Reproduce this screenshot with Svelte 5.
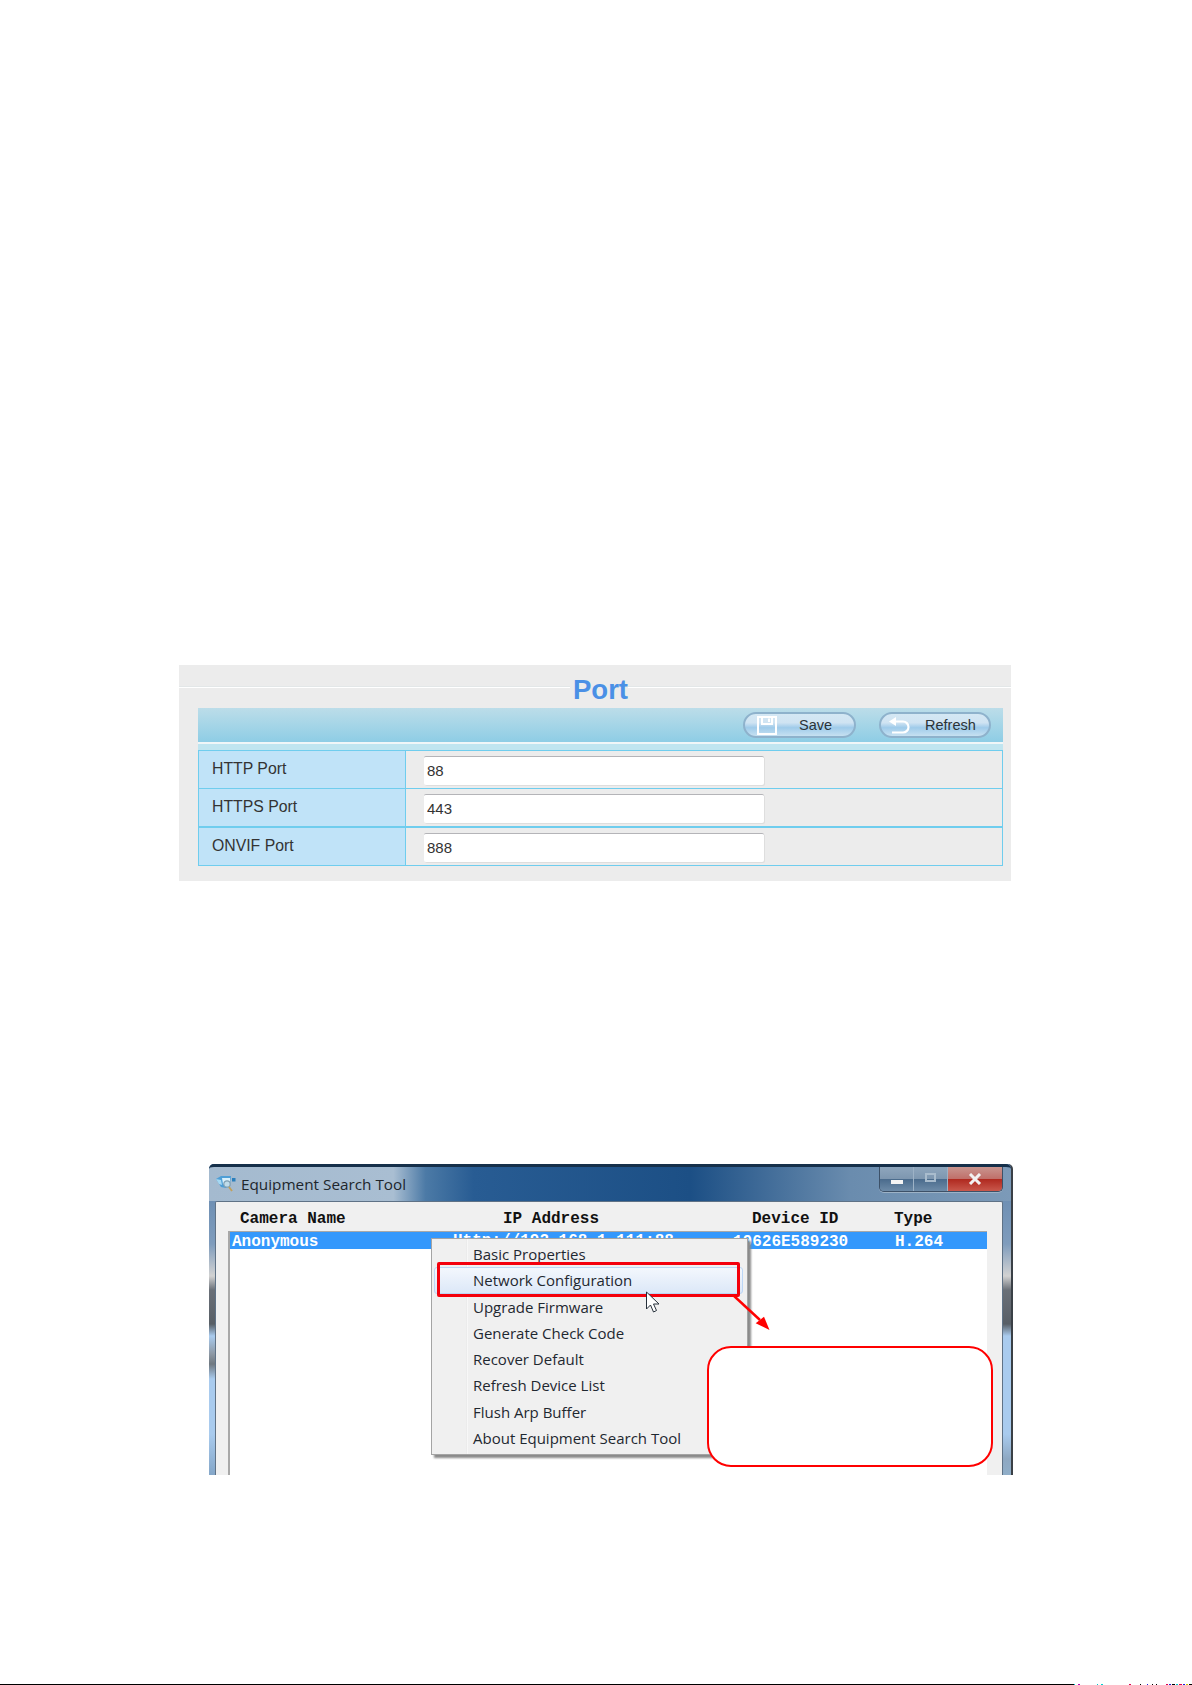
<script>
	const ports = [
		{ label: 'HTTP Port', value: '88' },
		{ label: 'HTTPS Port', value: '443' },
		{ label: 'ONVIF Port', value: '888' }
	];

	const menuItems = [
		'Basic Properties',
		'Network Configuration',
		'Upgrade Firmware',
		'Generate Check Code',
		'Recover Default',
		'Refresh Device List',
		'Flush Arp Buffer',
		'About Equipment Search Tool'
	];

	// the bottom rule breaks up into single pixels near the right edge
	const specks = [
		{ gap: 0, w: 1, c: '#00c8c8' }, { gap: 3, w: 2, c: '#c000c0' }, { gap: 17, w: 1, c: '#00c8c8' },
		{ gap: 3, w: 2, c: '#00d0d0' }, { gap: 26, w: 2, c: '#e00050' }, { gap: 9, w: 1, c: '#000' },
		{ gap: 6, w: 1, c: '#2020e0' }, { gap: 4, w: 1, c: '#000' }, { gap: 3, w: 1, c: '#000' },
		{ gap: 9, w: 2, c: '#e00050' }, { gap: 1, w: 2, c: '#2020e0' }, { gap: 1, w: 3, c: '#000' },
		{ gap: 1, w: 2, c: '#00c8c8' }, { gap: 1, w: 3, c: '#e00050' }, { gap: 1, w: 2, c: '#2020e0' },
		{ gap: 1, w: 2, c: '#d0c000' }, { gap: 1, w: 3, c: '#000' }
	];
</script>

<div class="page">
	<section class="port">
		<div class="title-row">
			<span class="rule"></span>
			<h2>Port</h2>
			<span class="rule right"></span>
		</div>
		<div class="toolbar">
			<button class="pill save">
				<svg width="20" height="19" viewBox="0 0 20 19" fill="none" stroke="#fff" stroke-width="2">
					<path d="M1 1h18v17H1z" />
					<path d="M5 1v7h10V1" />
					<path d="M11 2.500h2v3.500h-2z" fill="#fff" stroke="none" />
				</svg>
				<span>Save</span>
			</button>
			<button class="pill refresh">
				<svg width="21" height="17" viewBox="0 0 21 17" fill="none" stroke="#fff" stroke-width="2.200">
					<path d="M6 4.500h8a5.500 5.500 0 0 1 0 11H3" />
					<path d="M7 0 0 4.500 7 9z" fill="#fff" stroke="none" />
				</svg>
				<span>Refresh</span>
			</button>
		</div>
		<div class="strip"></div>
		<div class="table">
			{#each ports as port}
				<div class="row">
					<div class="label">{port.label}</div>
					<div class="field"><input type="text" value={port.value} readonly /></div>
				</div>
			{/each}
		</div>
	</section>

	<section class="window">
		<div class="titlebar">
			<svg class="app-icon" width="20" height="16" viewBox="0 0 20 16">
				<path d="M0 3 5 0h10l-1 8-4 4-5-1z" fill="#4f9fd6" />
				<path d="M0 3l5 1 1 5-3-1z" fill="#a6d8f2" />
				<path d="M6 2h8v5l-4 3-3-2z" fill="#d8f0fb" />
				<circle cx="11" cy="8" r="3.200" fill="#bfdcea" stroke="#7f9fb2" stroke-width="1.200" />
				<path d="M13 11l3 4" stroke="#c2a05a" stroke-width="1.800" />
				<path d="M16 2h3.500v3.500H16z" fill="#2a7fbc" />
			</svg>
			<span class="win-title">Equipment Search Tool</span>
			<div class="controls">
				<div class="ctl min"><i></i></div>
				<div class="ctl max"><i></i></div>
				<div class="ctl close">
					<svg width="14" height="12" viewBox="0 0 14 12">
						<path d="M2 1l10 10M12 1 2 11" stroke="#f2f2f2" stroke-width="3" />
					</svg>
				</div>
			</div>
		</div>
		<div class="client">
			<div class="cols">
				<b class="c1">Camera Name</b>
				<b class="c2">IP Address</b>
				<b class="c3">Device ID</b>
				<b class="c4">Type</b>
			</div>
			<div class="list">
				<div class="selected">
					<b class="r1">Anonymous</b>
					<b class="r2">Http://192.168.1.111:88</b>
					<b class="r3">10626E589230</b>
					<b class="r4">H.264</b>
				</div>
			</div>
		</div>

		<ul class="menu">
			{#each menuItems as item, i}
				<li class:hot={i === 1}>{item}</li>
			{/each}
		</ul>
		<div class="red-box"></div>
		<svg class="pointer" width="18" height="24" viewBox="0 0 18 24">
			<path d="M1.500 1v17l4-4 3 7 3-1.500-3-6.500h5.500z" fill="#fff" stroke="#26303a" stroke-width="1" />
		</svg>
		<svg class="arrow" width="42" height="40" viewBox="0 0 42 40">
			<path d="M1 0 28 25" stroke="#f00" stroke-width="2.500" />
			<path d="M37.500 35 23.700 28.300 32 21.700z" fill="#f00" />
		</svg>
		<div class="callout"></div>
	</section>

	<footer class="bottom">
		<div class="line"></div>
		{#each specks as s}
			<span style="margin-left:{s.gap}px;width:{s.w}px;background:{s.c}"></span>
		{/each}
	</footer>
</div>

<style>
	:global(body) {
		background: #fff;
	}
	.page {
		width: 1192px;
		height: 1685px;
		display: flex;
		flex-direction: column;
		padding-top: 665px;
		box-sizing: border-box;
		overflow: hidden;
	}

	/* port settings panel */
	.port {
		width: 832px;
		height: 216px;
		margin-left: 179px;
		background: #ececec;
		font-family: 'Liberation Sans', Arial, sans-serif;
		color: #333;
		box-sizing: border-box;
		padding-bottom: 17px;
	}
	.title-row {
		height: 43px;
		display: flex;
		align-items: flex-start;
	}
	.rule {
		flex: 1;
		height: 2px;
		margin-top: 21px;
		background: linear-gradient(#e3e7e8 50%, #fff 50%);
	}
	.rule.right {
		flex: none;
		width: 383px;
	}
	h2 {
		margin: 9px 0 0;
		padding: 0 0 0 3px;
		font-size: 27.500px;
		line-height: 32px;
		font-weight: bold;
		color: #4a90e6;
	}
	.toolbar {
		height: 34px;
		margin: 0 8px 0 19px;
		background: linear-gradient(#bcdde9, #8ecde5);
		display: flex;
		justify-content: flex-end;
		align-items: center;
		gap: 23px;
		padding-right: 12px;
	}
	.pill {
		width: 113px;
		height: 26px;
		box-sizing: border-box;
		border: 2px solid #8eb2cc;
		border-radius: 13px;
		background: linear-gradient(#d4e8f4, #cfe3f2 40%, #9fcbea 62%, #c6e0f1);
		display: flex;
		align-items: center;
		padding: 0 0 0 12px;
		font: 14.500px 'Liberation Sans', Arial, sans-serif;
		color: #2b3338;
	}
	.save span {
		margin-left: 22px;
	}
	.refresh {
		width: 112px;
		padding-left: 8px;
	}
	.refresh span {
		margin-left: 15px;
	}
	.strip {
		height: 8px;
		margin: 0 8px 0 19px;
		background: linear-gradient(#f0f6f8 25%, #c0e5f0 25%);
	}
	.table {
		margin: 0 8px 0 19px;
		border: 1px solid #6fcdee;
	}
	.row {
		display: flex;
		height: 37px;
		border-bottom: 1px solid #6fcdee;
	}
	.row:nth-child(2) {
		border-bottom-width: 2px;
	}
	.row:last-child {
		border-bottom: 0;
	}
	.label {
		width: 207px;
		padding: 6px 0 0 13px;
		box-sizing: border-box;
		background: #c0e3f8;
		border-right: 1px solid #6fcdee;
		font-size: 15.800px;
		line-height: 24px;
	}
	.field {
		padding: 5px 0 0 18px;
	}
	input {
		width: 340px;
		height: 29px;
		box-sizing: border-box;
		border: 0;
		border-top: 1px solid #b4b4b8;
		border-radius: 2px;
		box-shadow: 1px 1px 0 #dedede;
		background: #fff;
		padding: 0 0 2px 3px;
		font: 15px 'Liberation Sans', Arial, sans-serif;
		color: #333;
		outline: none;
	}

	/* search tool window, cropped at the bottom */
	.window {
		position: relative;
		width: 804px;
		height: 311px;
		margin: 283px 0 0 209px;
		box-sizing: border-box;
		border-right: 2px solid #3a4046;
		background:
			linear-gradient(#6f90b4 37px, #7f9cbc 80px, #d2d2d2 112px, #6a7078 126px, #585f66 160px, #a9cbee 172px, #8d98a4 190px, #6f7880 200px, #a9cbee 215px, #a9cbee 270px, #84a6c8 311px) left / 7px 100% no-repeat,
			linear-gradient(#6f90b4 37px, #7f9cbc 80px, #d2d2d2 112px, #6a7078 126px, #585f66 160px, #a9cbee 172px, #a9cbee 270px, #8ea8c2 295px, #90aec8 311px);
		border-radius: 5px 5px 0 0;
		font-family: 'Open Sans', sans-serif;
		color: #222;
	}
	.titlebar {
		height: 37px;
		display: flex;
		align-items: center;
		padding: 0 8px 0 7px;
		box-sizing: border-box;
		border-top: 3px solid #16304a;
		border-radius: 5px 5px 0 0;
		background: linear-gradient(90deg, #a4bacf 0, #a9bed2 23%, #4c7aa6 27%, #285c93 33%, #1c4f85 60%, #6a8cae 80%, #7c9ab8 100%);
	}
	.app-icon {
		flex: none;
	}
	.win-title {
		margin-left: 5px;
		font-size: 15.300px;
		color: #20262c;
	}
	.controls {
		margin-left: auto;
		display: flex;
		align-self: flex-start;
		height: 24px;
		border: 1px solid #3d5168;
		border-top: 0;
		border-radius: 0 0 5px 5px;
		box-shadow: 0 1px 0 #9db2c6;
		overflow: hidden;
	}
	.ctl {
		height: 100%;
		display: flex;
		align-items: center;
		justify-content: center;
		box-sizing: border-box;
		border-right: 1px solid #9db2c6;
	}
	.min,
	.max {
		width: 34px;
		background: linear-gradient(#8ea6bd 0, #7e97b0 48%, #4b6c8d 52%, #6d8ba8 100%);
	}
	.min i {
		width: 12px;
		height: 4px;
		margin-top: 6px;
		background: #f4f4f4;
	}
	.max i {
		width: 7px;
		height: 5px;
		border: 2px solid #a9bccd;
		margin-top: -3px;
	}
	.close {
		width: 54px;
		border-right: 0;
		background: linear-gradient(#c9958f 0, #c0706a 48%, #b02a20 52%, #c9584c 100%);
	}
	.client {
		position: absolute;
		left: 6px;
		right: 8px;
		top: 37px;
		bottom: 0;
		background: #f0f0f0;
		border: 1px solid #5f7286;
		border-bottom: 0;
		border-radius: 2px 2px 0 0;
		font-family: 'Liberation Mono', monospace;
		font-size: 16px;
		display: flex;
		flex-direction: column;
	}
	.cols {
		height: 29px;
		position: relative;
		flex: none;
		color: #111;
	}
	.cols b,
	.selected b {
		position: absolute;
		white-space: pre;
		line-height: 18px;
	}
	.cols b {
		top: 8px;
	}
	.c1 { left: 24px; }
	.c2 { left: 287px; }
	.c3 { left: 536px; }
	.c4 { left: 678px; }
	.list {
		flex: 1;
		margin: 0 15px 0 12px;
		background: #fff;
		border: 1px solid #a8a8a8;
		border-width: 1px 0 0 2px;
	}
	.selected {
		position: relative;
		height: 17px;
		background: #3498fc;
		color: #fff;
	}
	.selected b {
		top: 1px;
	}
	.selected .r2 {
		top: 0;
	}
	.r1 { left: 2px; }
	.r2 { left: 223px; }
	.r3 { left: 503px; }
	.r4 { left: 665px; }

	/* things lying over the window */
	.menu {
		position: absolute;
		left: 222px;
		top: 74px;
		width: 317px;
		height: 217px;
		box-sizing: border-box;
		margin: 0;
		padding: 2px 0;
		list-style: none;
		background: linear-gradient(90deg, #f0f0f0 34px, #d8d8d8 34px, #fff 35px, #f0f0f0 36px);
		border: 1px solid #a4a4a4;
		box-shadow: 3px 3px 2px #8a8a8a;
		font-size: 15px;
		color: #1f2830;
	}
	.menu li {
		height: 26.300px;
		line-height: 26px;
		padding-left: 41px;
		box-sizing: border-box;
		white-space: nowrap;
	}
	.menu li.hot {
		margin: 0 4px 0 2px;
		padding-left: 38px;
		border: 1px solid #bcd6f5;
		border-radius: 3px;
		line-height: 24px;
		background: linear-gradient(#f3f7fd, #dce8f8);
	}
	.red-box {
		position: absolute;
		left: 228px;
		top: 98px;
		width: 303px;
		height: 35px;
		box-sizing: border-box;
		border: 3px solid #f4000c;
		border-radius: 2px;
	}
	.pointer {
		position: absolute;
		left: 436px;
		top: 127px;
	}
	.arrow {
		position: absolute;
		left: 523px;
		top: 131px;
	}
	.callout {
		position: absolute;
		left: 498px;
		top: 182px;
		width: 286px;
		height: 121px;
		box-sizing: border-box;
		background: #fff;
		border: 2px solid #f00;
		border-radius: 24px;
	}

	.bottom {
		margin-top: auto;
		height: 1px;
		display: flex;
		flex: none;
	}
	.line {
		width: 1077px;
		background: #000;
	}
</style>
